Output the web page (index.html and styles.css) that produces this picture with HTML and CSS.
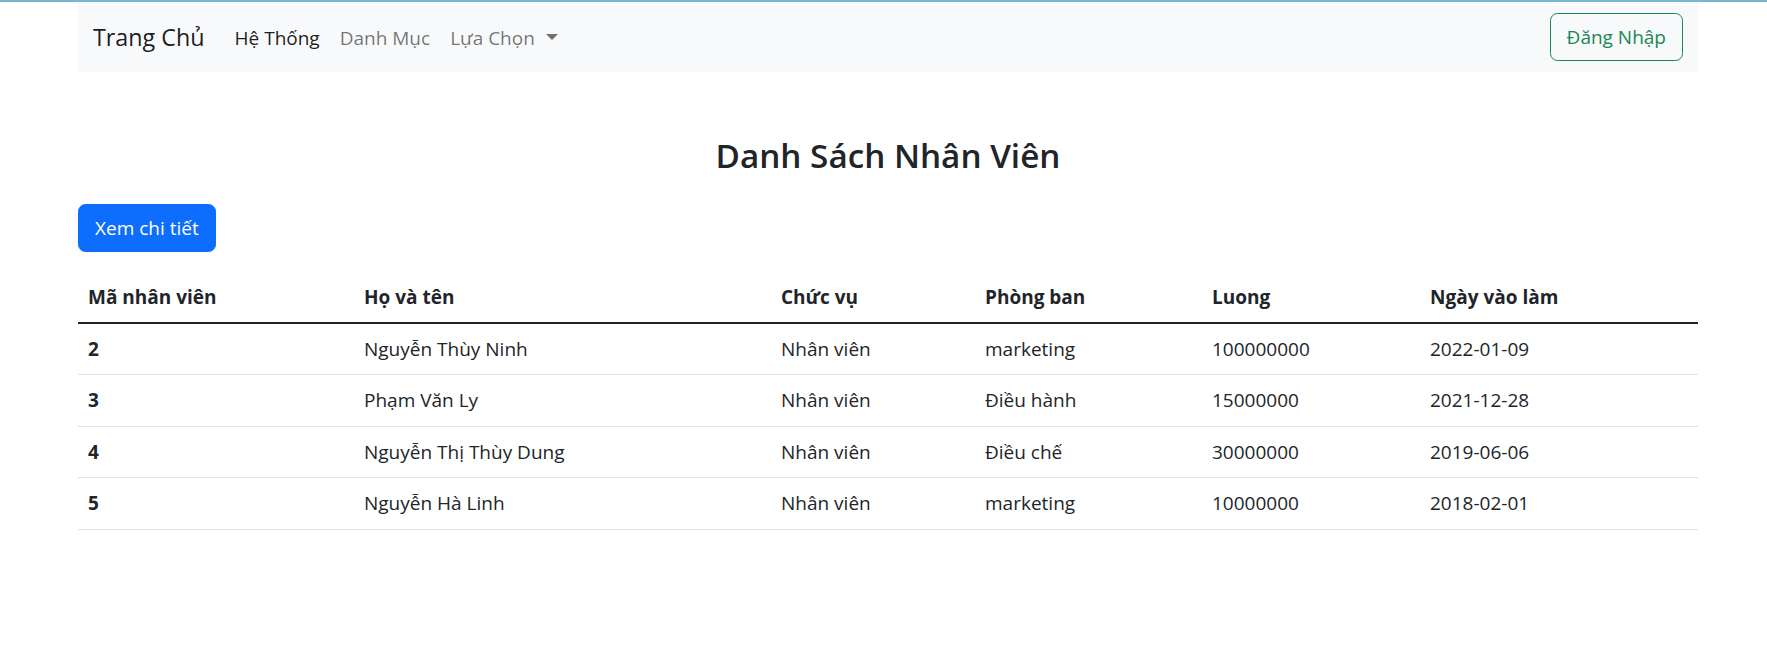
FILE: index.html
```html
<!DOCTYPE html>
<html lang="vi">
<head>
<meta charset="utf-8">
<title>Danh Sách Nhân Viên</title>
<link rel="stylesheet" href="styles.css">
</head>
<body>
<div class="topline"></div>
<div class="container">
  <nav class="navbar">
    <a class="brand">Trang Chủ</a>
    <ul class="nav">
      <li><a class="nav-link active">Hệ Thống</a></li>
      <li><a class="nav-link">Danh Mục</a></li>
      <li><a class="nav-link">Lựa Chọn<span class="caret"></span></a></li>
    </ul>
    <button class="btn btn-outline">Đăng Nhập</button>
  </nav>

  <h3 class="title">Danh Sách Nhân Viên</h3>
  <button class="btn btn-primary">Xem chi tiết</button>

  <table class="table">
    <colgroup>
      <col class="c1"><col class="c2"><col class="c3"><col class="c4"><col class="c5"><col class="c6">
    </colgroup>
    <thead>
      <tr>
        <th>Mã nhân viên</th>
        <th>Họ và tên</th>
        <th>Chức vụ</th>
        <th>Phòng ban</th>
        <th>Luong</th>
        <th>Ngày vào làm</th>
      </tr>
    </thead>
    <tbody>
      <tr>
        <th class="rowhead">2</th>
        <td>Nguyễn Thùy Ninh</td>
        <td>Nhân viên</td>
        <td>marketing</td>
        <td>100000000</td>
        <td>2022-01-09</td>
      </tr>
      <tr>
        <th class="rowhead">3</th>
        <td>Phạm Văn Ly</td>
        <td>Nhân viên</td>
        <td>Điều hành</td>
        <td>15000000</td>
        <td>2021-12-28</td>
      </tr>
      <tr>
        <th class="rowhead">4</th>
        <td>Nguyễn Thị Thùy Dung</td>
        <td>Nhân viên</td>
        <td>Điều chế</td>
        <td>30000000</td>
        <td>2019-06-06</td>
      </tr>
      <tr>
        <th class="rowhead">5</th>
        <td>Nguyễn Hà Linh</td>
        <td>Nhân viên</td>
        <td>marketing</td>
        <td>10000000</td>
        <td>2018-02-01</td>
      </tr>
    </tbody>
  </table>
</div>
</body>
</html>
```

FILE: styles.css
```css
html, body {
  margin: 0;
  padding: 0;
  background: #ffffff;
}

body {
  font-family: "Open Sans", "Noto Sans", "Liberation Sans", sans-serif;
  font-size: 19px;
  color: #212529;
}

.topline {
  height: 2px;
  background: #79b7ce;
}

.container {
  margin-left: 78px;
  width: 1620px;
}

/* navbar */
.navbar {
  box-sizing: border-box;
  height: 70px;
  padding: 0 15px;
  background: #f8f9fa;
  display: flex;
  align-items: center;
}

.brand {
  font-size: 23.3px;
  line-height: 37.5px;
  padding-top: 2px;
  margin-right: 20px;
  color: rgba(0, 0, 0, 0.9);
  white-space: nowrap;
}

.nav {
  list-style: none;
  margin: 0;
  padding: 0;
  display: flex;
  align-items: center;
}

.nav-link {
  display: block;
  padding: 2px 10px 0;
  line-height: 30px;
  font-size: 19px;
  color: rgba(0, 0, 0, 0.55);
  white-space: nowrap;
}

.nav-link.active {
  color: rgba(0, 0, 0, 0.9);
}

.caret {
  display: inline-block;
  width: 0;
  height: 0;
  margin-left: 11px;
  vertical-align: 5px;
  border-top: 6px solid currentColor;
  border-left: 6px solid transparent;
  border-right: 6px solid transparent;
}

/* buttons */
.btn {
  box-sizing: border-box;
  height: 48px;
  padding: 0 16px;
  font-family: inherit;
  font-size: 19px;
  line-height: 30px;
  border-radius: 7.5px;
  border: 1px solid transparent;
  cursor: pointer;
}

.btn-outline {
  margin-left: auto;
  color: #198754;
  border-color: #198754;
  background: transparent;
}

.btn-primary {
  display: block;
  color: #ffffff;
  background: #0d6efd;
  border-color: #0d6efd;
}

/* title */
.title {
  margin: 62px 0 28px;
  text-align: center;
  font-size: 33.25px;
  line-height: 42px;
  font-weight: 600;
  color: #212529;
}

/* table */
.table {
  width: 100%;
  table-layout: fixed;
  border-collapse: separate;
  border-spacing: 0;
  margin-top: 20px;
}

.c1 { width: 276px; }
.c2 { width: 417px; }
.c3 { width: 204px; }
.c4 { width: 227px; }
.c5 { width: 218px; }
.c6 { width: 278px; }

.table thead th {
  text-align: left;
  padding: 10px;
  line-height: 30px;
  font-weight: 700;
  border-bottom: 2px solid #212529;
}

.table tbody th,
.table tbody td {
  text-align: left;
  padding: 10px;
  line-height: 30.4px;
  border-bottom: 1px solid #dee2e6;
  white-space: nowrap;
}

.table tbody td {
  font-weight: 400;
}

.rowhead {
  font-weight: 700;
}
```
